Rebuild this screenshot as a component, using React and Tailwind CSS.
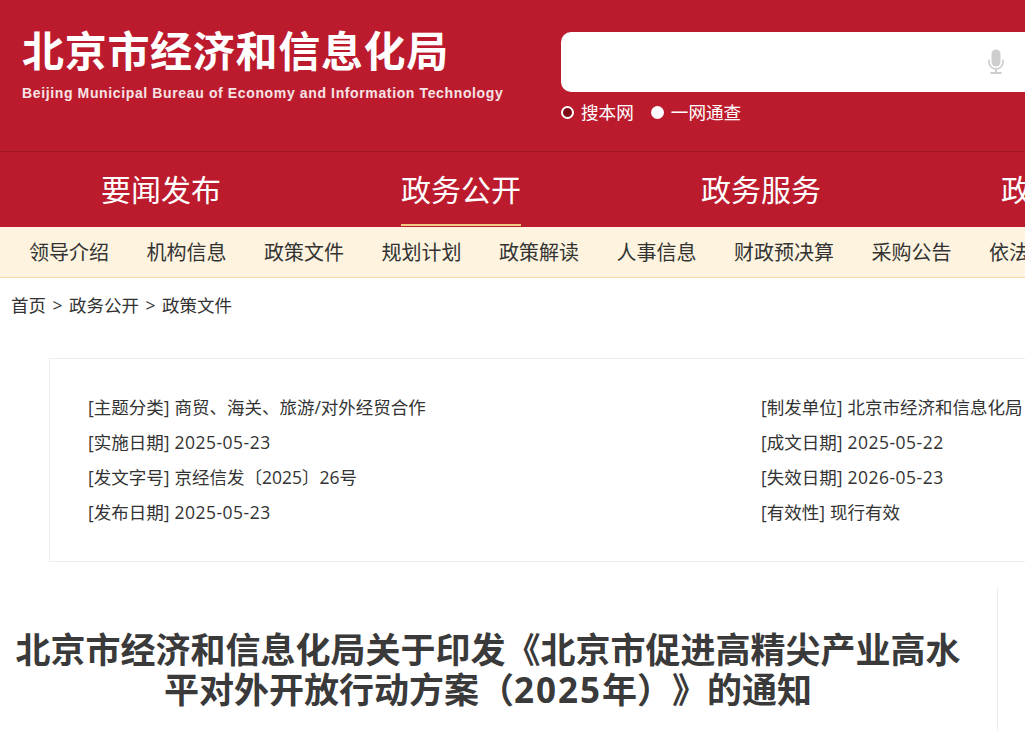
const mainNav = ["要闻发布", "政务公开", "政务服务", "政务信息"];
const subNav = ["领导介绍", "机构信息", "政策文件", "规划计划", "政策解读", "人事信息", "财政预决算", "采购公告", "依法行政"];

const leftInfo = [
  ["[主题分类]", "商贸、海关、旅游/对外经贸合作"],
  ["[实施日期]", "2025-05-23", true],
  ["[发文字号]", "京经信发〔2025〕26号"],
  ["[发布日期]", "2025-05-23", true],
];

const rightInfo = [
  ["[制发单位]", "北京市经济和信息化局"],
  ["[成文日期]", "2025-05-22", true],
  ["[失效日期]", "2026-05-23", true],
  ["[有效性]", "现行有效"],
];

function InfoColumn({ rows, className }) {
  return (
    <div className={className}>
      {rows.map(([label, value, isDate]) => (
        <div key={label} className="h-[35px] leading-[35px] whitespace-nowrap">
          <span>{label}</span>
          <span className={"ml-[5px] " + (isDate ? "tracking-[0.5px]" : "")}>{value}</span>
        </div>
      ))}
    </div>
  );
}

function MicIcon() {
  return (
    <svg width="16" height="26" viewBox="0 0 16 26" fill="none">
      <rect x="3.5" y="0.5" width="9" height="17" rx="4.5" fill="#cdcdcd" />
      <path d="M1 10.5v2.5a7 7 0 0 0 14 0v-2.5" stroke="#cdcdcd" strokeWidth="1.6" />
      <rect x="7" y="19.5" width="2" height="4" fill="#cdcdcd" />
      <rect x="2.5" y="23" width="11" height="2" fill="#cdcdcd" />
    </svg>
  );
}

export default function App() {
  return (
    <div className="w-[1025px] h-[730px] overflow-hidden bg-white text-[#333] [text-spacing-trim:space-all] font-['Open_Sans','Noto_Sans_CJK_SC',sans-serif]">
      <header className="h-[152px] bg-[#bc1b2e] border-b border-[#9f1626] flex">
        <div className="w-[561px] shrink-0 pl-[22px] pt-[25px] text-white">
          <div className="text-[42px] leading-[52px] font-bold tracking-[0.7px] whitespace-nowrap">
            北京市经济和信息化局
          </div>
          <div className="mt-[4px] text-[14px] leading-[24px] font-bold tracking-[0.63px] text-[#f7e3e5] whitespace-nowrap font-['Liberation_Sans',sans-serif]">
            Beijing Municipal Bureau of Economy and Information Technology
          </div>
        </div>
        <div className="flex-1 pt-[32px]">
          <div className="h-[60px] w-[600px] rounded-[10px] bg-white flex items-center pl-[427px]">
            <MicIcon />
          </div>
          <div className="mt-[7px] h-[27px] flex items-center text-[17.6px] text-white whitespace-nowrap">
            <span className="w-[13px] h-[13px] rounded-full border-2 border-white bg-[#7c0a14]" />
            <span className="ml-[7px]">搜本网</span>
            <span className="ml-[17px] w-[13px] h-[13px] rounded-full bg-white" />
            <span className="ml-[7px]">一网通查</span>
          </div>
        </div>
      </header>

      <nav className="h-[75px] bg-[#bc1b2e] flex pl-[11px] text-white text-[30px]">
        {mainNav.map((item, i) => (
          <div key={item} className="w-[300px] shrink-0 flex justify-center">
            <span
              className={
                "h-[74px] leading-[75px] whitespace-nowrap " +
                (i === 1 ? "border-b-2 border-[#f0cd85]" : "")
              }
            >
              {item}
            </span>
          </div>
        ))}
      </nav>

      <div className="h-[51px] bg-[#fdf3df] border-b border-[#f6d9a4] flex gap-[37.5px] pl-[29px] text-[20px] leading-[52px] whitespace-nowrap">
        {subNav.map((item) => (
          <span key={item}>{item}</span>
        ))}
      </div>

      <div className="h-[56px] pl-[11px] flex gap-[6.5px] text-[17.5px] leading-[54px] whitespace-nowrap">
        <span>首页</span>
        <span>&gt;</span>
        <span>政务公开</span>
        <span>&gt;</span>
        <span>政策文件</span>
      </div>

      <div className="ml-[49px] mt-[24px] w-[1100px] h-[204px] border border-[#eeeee6] flex pt-[31px] pl-[38px] text-[17.5px]">
        <InfoColumn rows={leftInfo} className="w-[673px] shrink-0" />
        <InfoColumn rows={rightInfo} className="flex-1" />
      </div>

      <div className="mt-[25px] w-[998px] h-[150px] border-r border-[#eeeee6] pt-[43px] pl-[8px] pr-[29px]">
        <h1 className="text-[35px] leading-[40px] font-bold text-[#3a3a3a] text-center">
          北京市经济和信息化局关于印发《北京市促进高精尖产业高水平对外开放行动方案（<span className="tracking-[2px]">2025</span>年）》的通知
        </h1>
      </div>
    </div>
  );
}
